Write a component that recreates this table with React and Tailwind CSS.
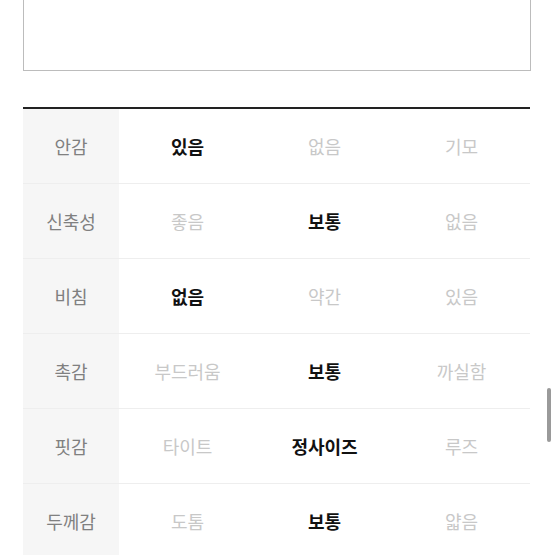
import React from "react";

const rows = [
  { label: "안감", options: ["있음", "없음", "기모"], selected: 0 },
  { label: "신축성", options: ["좋음", "보통", "없음"], selected: 1 },
  { label: "비침", options: ["없음", "약간", "있음"], selected: 0 },
  { label: "촉감", options: ["부드러움", "보통", "까실함"], selected: 1 },
  { label: "핏감", options: ["타이트", "정사이즈", "루즈"], selected: 1 },
  { label: "두께감", options: ["도톰", "보통", "얇음"], selected: 1 },
];

export default function App() {
  return (
    <div
      className="relative h-[555px] overflow-hidden bg-white"
      style={{ fontFamily: '"Noto Sans CJK KR", "Noto Sans", sans-serif' }}
    >
      <div className="ml-[23px] mr-[24px] h-[71px] border-x border-b border-[#bcbcbc]" />

      <div className="mt-[36px] ml-[23px] mr-[25px] border-t-2 border-[#222]">
        {rows.map((row) => (
          <div key={row.label} className="flex h-[75px] border-b border-[#eeeeee]">
            <div className="flex w-[96px] shrink-0 items-center justify-center bg-[#f6f6f6] text-[18px] text-[#808080]">
              {row.label}
            </div>
            <div className="grid flex-1 grid-cols-3">
              {row.options.map((opt, i) => (
                <div
                  key={opt}
                  className={
                    i === row.selected
                      ? "flex items-center justify-center text-[18px] font-bold text-[#111]"
                      : "flex items-center justify-center text-[18px] text-[#c8c8c8]"
                  }
                >
                  {opt}
                </div>
              ))}
            </div>
          </div>
        ))}
      </div>

      <div className="absolute left-[547px] top-[388px] h-[54px] w-[4px] rounded-full bg-[#9a9a9a]" />
    </div>
  );
}
